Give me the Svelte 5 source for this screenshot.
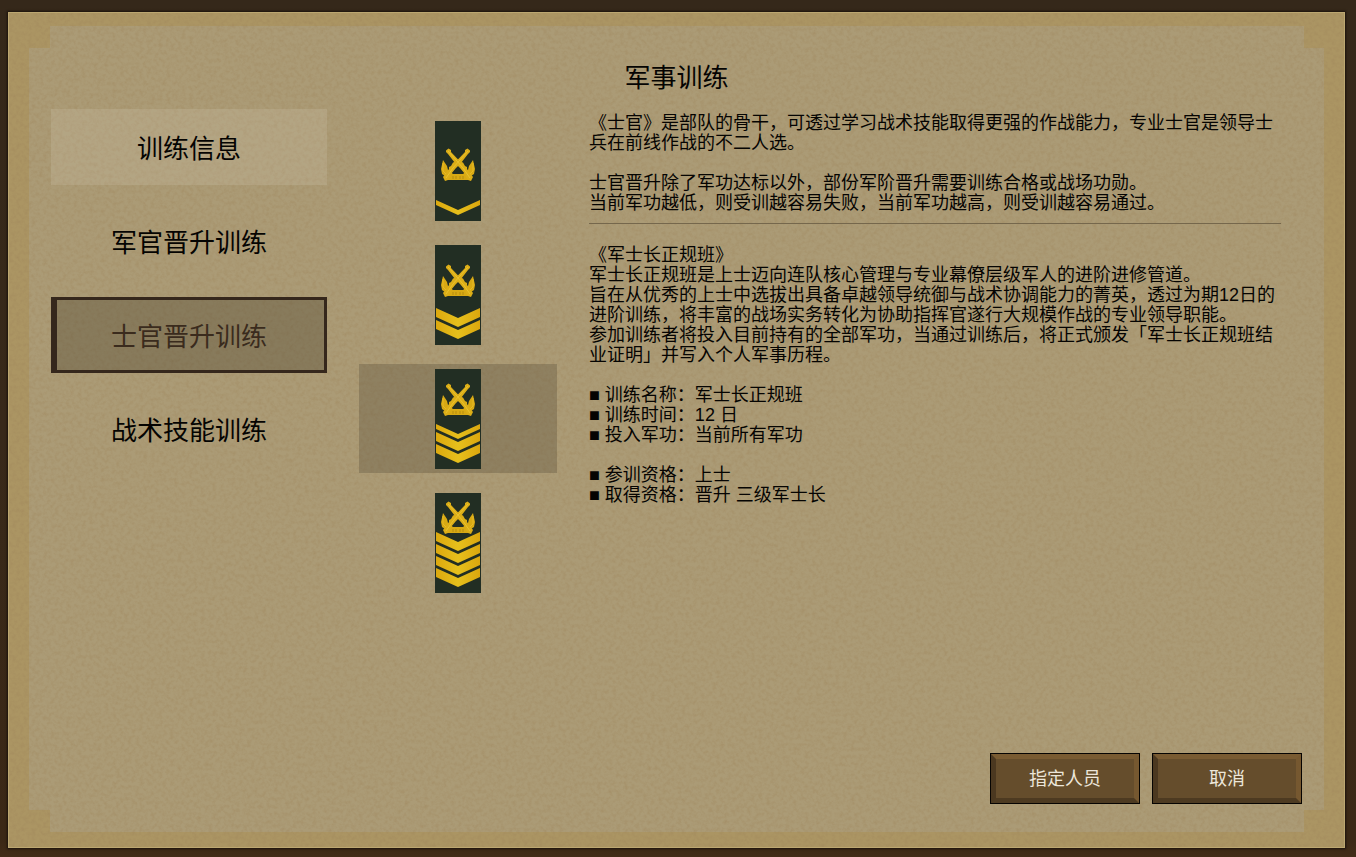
<script>
  let tab = $state('nco');
  let rank = $state(2);

  const tabs = [
    { id: 'info', label: '训练信息' },
    { id: 'officer', label: '军官晋升训练' },
    { id: 'nco', label: '士官晋升训练' },
    { id: 'skill', label: '战术技能训练' }
  ];

  // emblem: top of the crossed rifles; bars: [top of the chevron's arm, arm thickness]
  const ranks = [
    { name: '下士', emblem: 28, bars: [[79, 5]] },
    { name: '中士', emblem: 20, bars: [[63, 9], [75, 9]] },
    { name: '上士', emblem: 15, bars: [[55, 5], [63, 9], [75, 9]] },
    { name: '军士长', emblem: 9, bars: [[39, 9], [51, 9], [63, 9], [75, 9]] }
  ];

  const course = [
    '训练名称：军士长正规班',
    '训练时间：12 日',
    '投入军功：当前所有军功'
  ];
  const eligibility = ['参训资格：上士', '取得资格：晋升 三级军士长'];

  const rifle =
    'M11 1.500L13.500 -.5L16 1L16 3L25 12.500L28 13.500L30 17L32 18L32 20L38 28L37 30L36 32L33 31L31 28L30 25L25 19L20 14L13 5L11 3Z';

  const chevron = ([y, t]) =>
    `M1 ${y}L23 ${y + 10}L45 ${y}V${y + t}L23 ${y + 10 + t}L1 ${y + t}Z`;
</script>

<div class="frame">
  <div class="paper">
    <main class="panel">
      <h1>军事训练</h1>
      <div class="columns">
        <nav>
          {#each tabs as t (t.id)}
            <button
              class="tab"
              class:info={t.id === 'info'}
              class:active={tab === t.id}
              onclick={() => (tab = t.id)}>{t.label}</button>
          {/each}
        </nav>

        <div class="ranks">
          {#each ranks as r, i (r.name)}
            <button
              class="rank"
              class:chosen={rank === i}
              aria-label={r.name}
              onclick={() => (rank = i)}>
              <svg width="46" height="100" viewBox="0 0 46 100" aria-hidden="true">
                <defs>
                  <linearGradient id="gold{i}" x1="0" x2="1" y1="0" y2="0">
                    <stop offset="0" stop-color="#dca80e" />
                    <stop offset=".5" stop-color="#e6c01c" />
                    <stop offset="1" stop-color="#dba70e" />
                  </linearGradient>
                </defs>
                <rect width="46" height="100" fill="#222e23" />
                <g transform="translate(0 {r.emblem})">
                  <path
                    d="M8 11L10 14L12 17L13 21L16 24H30L33 21L34 17L36 14L38 11L40 20L39 25L36 27L35 31H11L10 27L7 25L6 20Z"
                    fill="#d8a913" />
                  <path d="M23 17L29 25H17Z" fill="#222e23" />
                  <path d="M18 27V30M21 27V30M25 27V30M28 27V30" stroke="#b58c10" stroke-width="1" />
                  <path d={rifle} fill="#dcae17" />
                  <path d={rifle} fill="#dcae17" transform="translate(46 0) scale(-1 1)" />
                  <path
                    d="M13 2L22 12L28 19L35 29M33 2L24 12L18 19L11 29"
                    stroke="#eac22e"
                    stroke-width="1"
                    fill="none" />
                  <path d="M8 14L8 22L11 25M38 14L38 22L35 25" stroke="#e7ba26" fill="none" />
                </g>
                {#each r.bars as b}
                  <path d={chevron(b)} fill="url(#gold{i})" />
                {/each}
              </svg>
            </button>
          {/each}
        </div>

        <article>
          <p>《士官》是部队的骨干，可透过学习战术技能取得更强的作战能力，专业士官是领导士兵在前线作战的不二人选。</p>
          <p class="gap">士官晋升除了军功达标以外，部份军阶晋升需要训练合格或战场功勋。</p>
          <p>当前军功越低，则受训越容易失败，当前军功越高，则受训越容易通过。</p>
          <hr />
          <h2>《军士长正规班》</h2>
          <p>军士长正规班是上士迈向连队核心管理与专业幕僚层级军人的进阶进修管道。</p>
          <p>旨在从优秀的上士中选拔出具备卓越领导统御与战术协调能力的菁英，透过为期12日的进阶训练，将丰富的战场实务转化为协助指挥官遂行大规模作战的专业领导职能。</p>
          <p>参加训练者将投入目前持有的全部军功，当通过训练后，将正式颁发「军士长正规班结业证明」并写入个人军事历程。</p>
          <ul class="gap">
            {#each course as line}<li>■ {line}</li>{/each}
          </ul>
          <ul class="gap">
            {#each eligibility as line}<li>■ {line}</li>{/each}
          </ul>
        </article>
      </div>
      <footer>
        <button class="action">指定人员</button>
        <button class="action">取消</button>
      </footer>
    </main>
    <svg class="grain" width="100%" height="100%" aria-hidden="true">
      <filter id="grain" x="0" y="0" width="100%" height="100%">
        <feTurbulence type="fractalNoise" baseFrequency=".26" numOctaves="3" seed="7" />
        <feColorMatrix values="0 0 0 0 .34  0 0 0 0 .23  0 0 0 0 .1  .8 0 0 0 -.3" />
      </filter>
      <rect width="100%" height="100%" filter="url(#grain)" />
    </svg>
  </div>
</div>

<style>
  :global(body) {
    margin: 0;
    background: #35261a;
  }
  .frame {
    box-sizing: border-box;
    min-height: 100vh;
    padding: 12px 11px 9px 8px;
    display: flex;
    background: linear-gradient(#35281a, #38291a 50%, #3b2816 98%, #432c17);
    font-family: "Liberation Sans", "Noto Sans CJK SC", sans-serif;
    color: #050402;
    text-spacing-trim: space-all;
    text-autospace: no-autospace;
  }
  .paper {
    position: relative;
    isolation: isolate;
    flex: 1;
    min-width: 0;
    display: flex;
    padding: 13px 20px 15px;
    background: #ab9563;
    border: 1px solid #bca771;
    box-shadow: 0 0 2px 1px #1b120b;
  }
  .grain {
    position: absolute;
    inset: 0;
    z-index: -1;
    pointer-events: none;
  }
  .panel {
    position: relative;
    flex: 1;
    min-width: 0;
    display: flex;
    flex-direction: column;
    padding: 34px 22px 28px;
  }
  .panel::before {
    content: "";
    position: absolute;
    inset: 0;
    z-index: -1;
    background: rgba(171, 160, 135, 0.55);
    clip-path: polygon(21px 0, calc(100% - 20px) 0, calc(100% - 20px) 22px, 100% 22px, 100% calc(100% - 22px), calc(100% - 20px) calc(100% - 22px), calc(100% - 20px) 100%, 21px 100%, 21px calc(100% - 22px), 0 calc(100% - 22px), 0 22px, 21px 22px);
  }
  h1 {
    margin: 0;
    text-align: center;
    font-size: 26px;
    line-height: 36px;
    font-weight: 400;
  }
  .columns {
    flex: 1;
    display: grid;
    grid-template-columns: 276px 198px minmax(0, 1fr);
    column-gap: 32px;
    align-items: start;
    padding: 13px 21px 0 0;
  }
  nav {
    display: flex;
    flex-direction: column;
    gap: 18px;
  }
  button {
    font: inherit;
    color: inherit;
    cursor: pointer;
  }
  .tab {
    height: 76px;
    padding: 3px 0 0;
    border: 0;
    background: none;
    font-size: 26px;
    line-height: 36px;
  }
  .info {
    background: rgba(216, 206, 184, 0.2);
  }
  .active {
    padding-right: 3px;
    border: solid #35271c;
    border-width: 3px 3px 3px 6px;
    background: rgba(74, 66, 48, 0.36);
    color: #3a2b1d;
  }
  .ranks {
    display: flex;
    flex-direction: column;
    gap: 15px;
    padding-top: 7px;
  }
  .rank {
    display: flex;
    justify-content: center;
    padding: 5px 0 4px;
    border: 0;
    background: none;
  }
  .chosen {
    background: rgba(80, 68, 50, 0.3);
  }
  .rank svg {
    display: block;
  }
  article {
    padding-top: 4px;
    font-size: 18px;
    line-height: 20px;
  }
  article p,
  article ul,
  h2 {
    margin: 0;
    padding: 0;
    font-size: 18px;
    font-weight: 400;
    list-style: none;
  }
  article .gap {
    margin-top: 20px;
  }
  hr {
    margin: 10px 0 21px;
    border: 0;
    height: 1px;
    background: #75674c;
  }
  footer {
    display: flex;
    justify-content: flex-end;
    gap: 12px;
  }
  .action {
    width: 150px;
    height: 51px;
    padding: 0 0 3px;
    border: 6px solid;
    border-color: #795b32 #765830 #4d3a21 #4b3820;
    outline: 1px solid #060402;
    outline-offset: -1px;
    background: #654d2c;
    color: #ece6da;
    font-size: 18px;
  }
</style>
